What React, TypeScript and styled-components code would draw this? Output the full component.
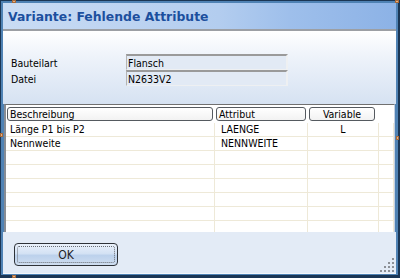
import React from 'react';
import styled, { createGlobalStyle } from 'styled-components';

const Global = createGlobalStyle`
  html, body { margin: 0; padding: 0; background: #1b3654; }
  body {
    width: 400px; height: 278px; overflow: hidden;
    font-family: "DejaVu Sans Condensed", "DejaVu Sans", sans-serif;
    font-size: 10.5px; color: #000;
  }
`;

const Window = styled.div`
  position: relative;
  width: 400px;
  height: 278px;
  box-sizing: border-box;
  border: 1px solid #1b3654;
  border-bottom-width: 3px;
  border-right-width: 2px;
  padding: 2px 2px 1px 2px;
  background: #4f82b4;
  display: flex;
  flex-direction: column;
`;

const TitleBar = styled.div`
  height: 28px;
  flex: none;
  box-sizing: border-box;
  padding-left: 5px;
  display: flex;
  align-items: center;
  background: linear-gradient(to right, #cadcf4 0%, #b3cdef 55%, #9ebfeb 73%, #8cb2e6 100%);
  border-bottom: 2px solid #9c9fa4;
`;

const TitleText = styled.span`
  font-family: "DejaVu Sans", sans-serif;
  font-weight: bold;
  font-size: 12.4px;
  color: #1c4f9e;
  padding-top: 1px;
`;

const Body = styled.div`
  flex: none;
  height: 73px;
  box-sizing: border-box;
  padding: 23px 0 0 8px;
  background: linear-gradient(to bottom, #ffffff 0%, #eef3fa 35%, #d6e2f2 100%);
`;

const Form = styled.div`
  display: grid;
  grid-template-columns: 115px 162px;
  grid-auto-rows: 16px;
`;

const Label = styled.div`
  display: flex;
  align-items: center;
  padding-top: 2px;
`;

const Field = styled.div`
  box-sizing: border-box;
  display: flex;
  align-items: center;
  padding-left: 1px;
  padding-top: 1px;
  background: #e2eaf5;
  border-top: 2px solid #9a9a9a;
  border-left: 1px solid #b4b4b4;
  border-right: 2px solid #eef0f2;
  border-bottom: 1px solid #eef0f2;
`;

const Table = styled.div`
  flex: none;
  height: 128px;
  box-sizing: border-box;
  margin: 0 1px 0 1px;
  background: #ffffff;
  border-top: 1px solid #707070;
  border-left: 2px solid #878c94;
  border-right: 1px solid #c3d1e4;
  overflow: hidden;
`;

const cols = '209px 93px 71px 1fr';

const HeaderRow = styled.div`
  height: 18px;
  box-sizing: border-box;
  padding-top: 2px;
  display: grid;
  grid-template-columns: ${cols};
`;

const HeaderCell = styled.div<{ $center?: boolean; $mr?: number }>`
  height: 14px;
  box-sizing: border-box;
  margin: 0 ${(p) => p.$mr ?? 1}px 0 1px;
  border: 1px solid #555a60;
  border-radius: 3px;
  background: linear-gradient(to bottom, #ffffff, #f2f2f2);
  display: flex;
  align-items: center;
  justify-content: ${(p) => (p.$center ? 'center' : 'flex-start')};
  padding-left: ${(p) => (p.$center ? 0 : 2)}px;
  line-height: 12px;
`;

const Row = styled.div`
  height: 14px;
  box-sizing: border-box;
  display: grid;
  grid-template-columns: ${cols};
  border-bottom: 1px solid #eee9d8;
`;

const Cell = styled.div<{ $center?: boolean; $pl?: number }>`
  box-sizing: border-box;
  border-right: 1px solid #eee9d8;
  display: flex;
  align-items: center;
  justify-content: ${(p) => (p.$center ? 'center' : 'flex-start')};
  padding-left: ${(p) => (p.$center ? 0 : p.$pl ?? 4)}px;
  line-height: 13px;
  white-space: nowrap;
`;

const Footer = styled.div`
  flex: 1;
  position: relative;
  box-sizing: border-box;
  padding: 11px 0 0 11px;
  background: #e3ebf6;
  border-bottom: 1px solid #f3f6fa;
`;

const Button = styled.button`
  width: 104px;
  height: 23px;
  box-sizing: border-box;
  padding: 2px;
  border: 1px solid #2e3238;
  border-radius: 4px;
  background: linear-gradient(to bottom, #eaf1fb 0%, #d4e2f4 45%, #bcd1ec 55%, #cfdef1 100%);
  font-family: "DejaVu Sans Condensed", "DejaVu Sans", sans-serif;
  font-size: 12px;
  color: #1e2228;
  display: flex;
`;

const Focus = styled.span`
  flex: 1;
  border: 1px dotted #6a6e74;
  border-radius: 2px;
  display: flex;
  align-items: center;
  justify-content: center;
`;

const Grip = styled.svg`
  position: absolute;
  right: 2px;
  bottom: 1px;
`;

const Handle = styled.div<{ $x: number; $y: number; $w: number; $h: number }>`
  position: absolute;
  left: ${(p) => p.$x}px;
  top: ${(p) => p.$y}px;
  width: ${(p) => p.$w}px;
  height: ${(p) => p.$h}px;
  background: #e8b080;
  border: 1px solid #a86a3a;
  box-sizing: border-box;
`;

const rows: [string, string, string][] = [
  ['Länge P1 bis P2', 'LAENGE', 'L'],
  ['Nennweite', 'NENNWEITE', ''],
  ['', '', ''],
  ['', '', ''],
  ['', '', ''],
  ['', '', ''],
  ['', '', ''],
  ['', '', ''],
  ['', '', ''],
];

const dots: [number, number][] = [];
for (let r = 0; r < 4; r++) {
  for (let c = 3 - r; c < 4; c++) dots.push([c * 4, r * 4]);
}

export default function App() {
  return (
    <>
      <Global />
      <Window>
        <TitleBar>
          <TitleText>Variante: Fehlende Attribute</TitleText>
        </TitleBar>
        <Body>
          <Form>
            <Label>Bauteilart</Label>
            <Field>Flansch</Field>
            <Label>Datei</Label>
            <Field>N2633V2</Field>
          </Form>
        </Body>
        <Table>
          <HeaderRow>
            <HeaderCell $mr={2}>Beschreibung</HeaderCell>
            <HeaderCell $mr={2}>Attribut</HeaderCell>
            <HeaderCell $center $mr={4}>Variable</HeaderCell>
            <div />
          </HeaderRow>
          {rows.map((r, i) => (
            <Row key={i}>
              <Cell>{r[0]}</Cell>
              <Cell $pl={6}>{r[1]}</Cell>
              <Cell $center>{r[2]}</Cell>
              <Cell />
            </Row>
          ))}
        </Table>
        <Footer>
          <Button>
            <Focus>OK</Focus>
          </Button>
          <Grip width="15" height="15" viewBox="0 0 15 15">
            {dots.map(([x, y], i) => (
              <rect key={i} x={x + 1} y={y + 1} width="2" height="2" fill="#8c9096" />
            ))}
          </Grip>
        </Footer>
        <Handle $x={11} $y={-1} $w={4} $h={3} />
        <Handle $x={394} $y={-1} $w={4} $h={3} />
        <Handle $x={-1} $y={132} $w={3} $h={4} />
        <Handle $x={395} $y={135} $w={3} $h={4} />
        <Handle $x={11} $y={274} $w={4} $h={3} />
      </Window>
    </>
  );
}
